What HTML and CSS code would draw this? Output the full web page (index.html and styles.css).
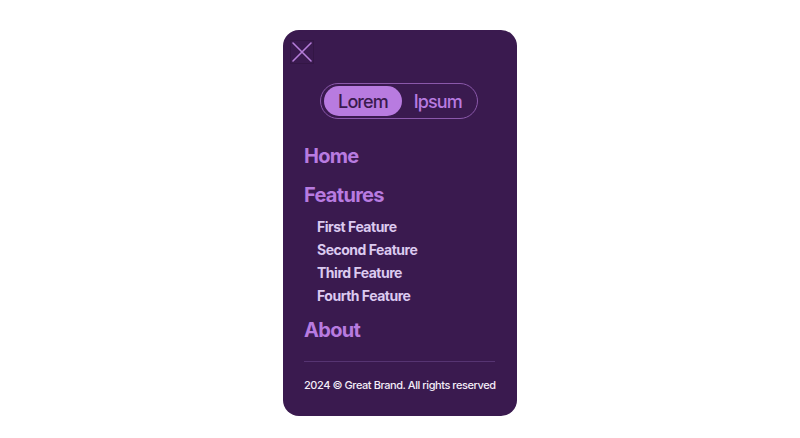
FILE: index.html
```html
<!DOCTYPE html>
<html lang="en">
<head>
<meta charset="utf-8">
<title>Menu</title>
<link rel="stylesheet" href="styles.css">
</head>
<body>
<div class="panel">
  <button class="close" aria-label="Close">
    <svg width="22" height="22" viewBox="0 0 22 22"><path d="M2 2 L20 20 M20 2 L2 20" stroke="#b57dd9" stroke-width="1.6" fill="none" stroke-linecap="round"/></svg>
  </button>
  <div class="toggle-wrap">
    <div class="toggle">
      <span class="opt active">Lorem</span>
      <span class="opt">Ipsum</span>
    </div>
  </div>
  <nav class="nav">
    <a class="main" href="#">Home</a>
    <a class="main" href="#">Features</a>
    <ul class="sub">
      <li><a href="#">First Feature</a></li>
      <li><a href="#">Second Feature</a></li>
      <li><a href="#">Third Feature</a></li>
      <li><a href="#">Fourth Feature</a></li>
    </ul>
    <a class="main about" href="#">About</a>
  </nav>
  <div class="footer">2024 © Great Brand. All rights reserved</div>
</div>
</body>
</html>
```

FILE: styles.css
```css
* { box-sizing: border-box; }
html, body { margin: 0; padding: 0; background: #ffffff; }
body {
  font-family: Inter, "Noto Sans", sans-serif;
  display: flex;
  justify-content: center;
  padding-top: 30px;
}
.panel {
  width: 234px;
  height: 386px;
  background: #3a1a4f;
  border-radius: 16px;
  padding: 10px 22px 0 21px;
  display: flex;
  flex-direction: column;
}
.close {
  width: 24px;
  height: 24px;
  margin-left: -14px;
  padding: 0;
  border: 1px solid #331645;
  background: transparent;
  display: flex;
  align-items: center;
  justify-content: center;
  cursor: pointer;
}
.toggle-wrap {
  display: flex;
  justify-content: center;
  margin-top: 19px;
  margin-right: 1px;
}
.toggle {
  display: flex;
  border: 1px solid #8a58aa;
  border-radius: 999px;
  padding: 2px 3px;
  height: 36px;
}
.opt {
  display: flex;
  align-items: center;
  padding: 0 12px;
  height: 30px;
  border-radius: 999px;
  font-size: 18px;
  font-weight: 500;
  letter-spacing: -0.05em;
  color: #b87be0;
}
.opt.active {
  padding: 0 14px;
  background: #b87be0;
  color: #3a1a4f;
}
.nav {
  display: flex;
  flex-direction: column;
  margin-top: 25px;
}
.nav a { text-decoration: none; }
.main {
  font-size: 20px;
  font-weight: 700;
  letter-spacing: -0.035em;
  color: #b87be0;
  line-height: 24px;
}
.main + .main { margin-top: 15px; }
.sub {
  list-style: none;
  margin: 8px 0 0 0;
  padding: 0 0 0 13px;
}
.sub li { line-height: 23px; }
.sub a {
  font-size: 14px;
  font-weight: 700;
  letter-spacing: -0.035em;
  color: #dccaef;
}
.about { margin-top: 11px; }
.footer {
  margin-top: 19px;
  border-top: 1px solid #563472;
  padding-top: 16px;
  font-size: 11px;
  font-weight: 500;
  color: #f3ecf7;
  letter-spacing: -0.04em;
  white-space: nowrap;
}
```
